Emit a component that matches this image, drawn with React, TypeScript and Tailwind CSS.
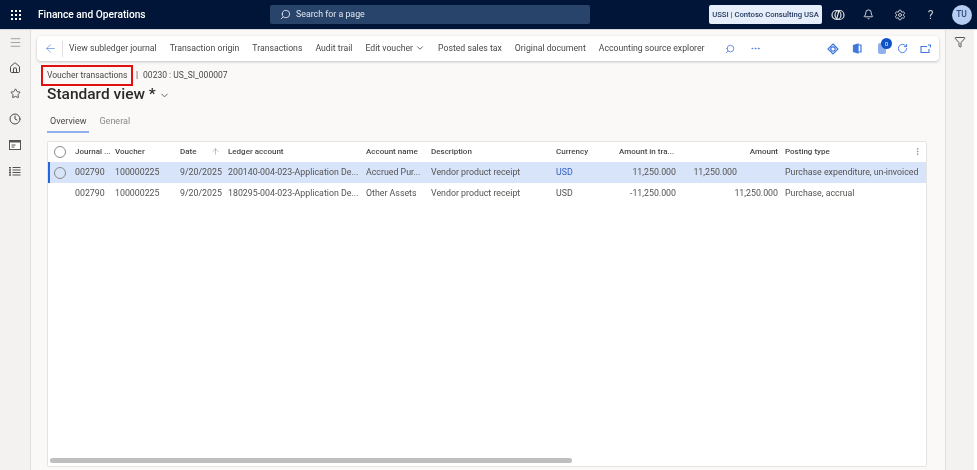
import { Bell, ChevronDown, Clock, Filter, Home, Search, Settings, Star, ArrowLeft, ArrowUp, MoreHorizontal, MoreVertical, RotateCw, Menu } from 'lucide-react';

const actions = ['View subledger journal', 'Transaction origin', 'Transactions', 'Audit trail'];
const actionsAfter = ['Posted sales tax', 'Original document', 'Accounting source explorer'];

function Waffle() {
  return (
    <div className="grid w-fit grid-cols-[repeat(3,2px)] gap-[2px]">
      {Array.from({ length: 9 }).map((_, i) => (
        <span key={i} className="h-[2px] w-[2px] bg-white" />
      ))}
    </div>
  );
}

function Radio() {
  return <span className="block h-[12px] w-[12px] rounded-full border border-[#8a8886] bg-transparent" />;
}

function TopBar() {
  return (
    <header className="flex h-[29px] shrink-0 items-center bg-[#001537] text-white">
      <div className="w-[38px] pl-[11px]">
        <Waffle />
      </div>
      <span className="w-[232px] text-[10.2px] font-medium">Finance and Operations</span>
      <div className="flex h-[19px] w-[320px] items-center gap-[5px] rounded-[2px] bg-[#29446b] pl-[10px] text-[8.8px] text-[#dfe6ef]">
        <Search size={11} className="-scale-x-100" />
        <span>Search for a page</span>
      </div>
      <div className="ml-[119px] flex h-[19px] w-[113px] items-center justify-center rounded-[2px] bg-[#e6eefb] text-[7.7px] font-medium text-[#243a5e]">
        USSI | Contoso Consulting USA
      </div>
      <div className="flex w-[31px] justify-center">
        <svg width="14" height="14" viewBox="0 0 14 14" fill="none" stroke="#e4e4e4" strokeWidth="1.2">
          <circle cx="5.5" cy="7" r="4.5" />
          <circle cx="8.5" cy="7" r="4.5" />
          <path d="M8 2.5 5.5 11.5" />
        </svg>
      </div>
      <div className="flex w-[31px] justify-center text-[#e4e4e4]">
        <Bell size={11} />
      </div>
      <div className="flex w-[31px] justify-center text-[#c9ccd2]">
        <Settings size={12} />
      </div>
      <div className="flex w-[31px] justify-center text-[12px] text-[#c9ccd2]">?</div>
      <div className="flex w-[31px] justify-center">
        <div className="flex h-[20px] w-[20px] items-center justify-center rounded-full bg-[#b6cdf2] text-[8.5px] font-medium text-[#2e4a7d]">
          TU
        </div>
      </div>
    </header>
  );
}

function SideRail() {
  return (
    <aside className="flex w-[31px] shrink-0 flex-col items-center border-r border-[#e1dfdd] bg-[#f3f2f1] pt-[6px] text-[#4a4a4a]">
      <Menu size={13} strokeWidth={1.2} className="text-[#777]" />
      <Home size={12} className="mt-[13px]" />
      <Star size={11} className="mt-[14px]" />
      <Clock size={12} className="mt-[14px]" />
      <svg width="12" height="10" viewBox="0 0 12 10" className="mt-[15px]">
        <rect x="0.5" y="0.5" width="11" height="9" fill="#fff" stroke="#555" />
        <rect x="0.5" y="0.5" width="11" height="2" fill="#555" />
        <path d="M2.5 5h4M2.5 7h3" stroke="#555" />
      </svg>
      <svg width="12" height="11" viewBox="0 0 12 11" className="mt-[16px]" stroke="#555" strokeWidth="1">
        <path d="M1 1v9M3.500 1.500h8M3.500 4h8M3.500 6.500h8M3.500 9h8M0 1.500h2M0 4h2M0 6.500h2M0 9h2" />
      </svg>
    </aside>
  );
}

function Toolbar() {
  return (
    <div className="flex h-[25px] items-center rounded-[4px] bg-white text-[8.7px] text-[#4a4846] shadow-[0_1px_3px_rgba(0,0,0,0.22)]">
      <ArrowLeft size={13} strokeWidth={1.2} className="ml-[7px] text-[#4f7fe0]" />
      <span className="ml-[5px] h-[16px] w-px bg-[#e1dfdd]" />
      <div className="ml-[6px] flex w-[638px] shrink-0 items-center gap-[13px]">
        {actions.map((a) => (
          <span key={a} className="whitespace-nowrap">{a}</span>
        ))}
        <span className="flex items-center gap-[2px] whitespace-nowrap">
          Edit voucher
          <ChevronDown size={10} />
        </span>
        {actionsAfter.map((a) => (
          <span key={a} className="whitespace-nowrap">{a}</span>
        ))}
      </div>
      <Search size={10} className="ml-[18px] -scale-x-100 text-[#4f7fe0]" />
      <MoreHorizontal size={11} className="ml-[15px] text-[#4f7fe0]" />
      <div className="ml-auto mr-[8px] flex items-center text-[#3f78dc]">
        <svg width="12" height="12" viewBox="0 0 12 12" fill="none" stroke="currentColor" strokeWidth="1.2">
          <path d="M6 1 11 6 6 11 1 6Z" />
          <circle cx="6" cy="6" r="2.2" />
        </svg>
        <svg width="10" height="11" viewBox="0 0 10 11" className="ml-[13px]" fill="none" stroke="currentColor" strokeWidth="1.2">
          <path d="M6 1 1.500 2.500v6L6 10Z" fill="currentColor" />
          <path d="M6 2h3v7H6" />
        </svg>
        <div className="relative ml-[16px] h-[11px] w-[8px] rounded-[2px] bg-[#8fb0ec]">
          <span className="absolute -right-[6px] -top-[5px] flex h-[11px] w-[11px] items-center justify-center rounded-full bg-[#0f52c8] text-[6px] text-white">
            0
          </span>
        </div>
        <RotateCw size={11} className="ml-[11px]" />
        <svg width="11" height="10" viewBox="0 0 11 10" className="ml-[12px]" fill="none" stroke="currentColor" strokeWidth="1.100">
          <path d="M7 2.500H1v6h8V5M8 1h2.500v2.500" />
        </svg>
      </div>
    </div>
  );
}

type Row = {
  journal: string;
  voucher: string;
  date: string;
  ledger: string;
  name: string;
  currency: string;
  amountTra: string;
  posting: string;
};

const rows: Row[] = [
  { journal: '002790', voucher: '100000225', date: '9/20/2025', ledger: '200140-004-023-Application De...', name: 'Accrued Pur...', currency: 'USD', amountTra: '11,250.000', posting: 'Purchase expenditure, un-invoiced' },
  { journal: '002790', voucher: '100000225', date: '9/20/2025', ledger: '180295-004-023-Application De...', name: 'Other Assets', currency: 'USD', amountTra: '-11,250.000', posting: 'Purchase, accrual' },
];

function HeaderRow() {
  return (
    <div className="flex h-[20px] items-center text-[8px] font-medium text-[#4a4846]">
      <div className="w-[27px] shrink-0 pl-[6px]">
        <Radio />
      </div>
      <div className="w-[40px] shrink-0">Journal ...</div>
      <div className="w-[65px] shrink-0">Voucher</div>
      <div className="flex w-[48px] shrink-0 items-center">
        Date
        <ArrowUp size={9} strokeWidth={1.2} className="ml-[15px] text-[#777]" />
      </div>
      <div className="w-[138px] shrink-0">Ledger account</div>
      <div className="w-[65px] shrink-0">Account name</div>
      <div className="w-[125px] shrink-0">Description</div>
      <div className="w-[63px] shrink-0">Currency</div>
      <div className="w-[76px] shrink-0">Amount in tra...</div>
      <div className="w-[83px] shrink-0 text-right">Amount</div>
      <div className="ml-[7px] flex flex-1 items-center justify-between pr-[4px]">
        Posting type
        <MoreVertical size={9} className="text-[#888]" />
      </div>
    </div>
  );
}

function DataRow({ row, selected }: { row: Row; selected: boolean }) {
  return (
    <div
      className={`flex h-[21px] items-center border-l-2 pt-[1px] text-[8.8px] text-[#55534f] ${
        selected ? 'border-[#2266e3] bg-[#d7e4fa]' : 'border-transparent bg-white'
      }`}
    >
      <div className="w-[25px] shrink-0 pl-[4px]">{selected && <Radio />}</div>
      <div className="w-[40px] shrink-0">{row.journal}</div>
      <div className="w-[65px] shrink-0">{row.voucher}</div>
      <div className="w-[48px] shrink-0">{row.date}</div>
      <div className="w-[138px] shrink-0 whitespace-nowrap">{row.ledger}</div>
      <div className="w-[65px] shrink-0 whitespace-nowrap">{row.name}</div>
      <div className="w-[125px] shrink-0">Vendor product receipt</div>
      <div className={`w-[63px] shrink-0 ${selected ? 'text-[#2f5fc4]' : ''}`}>{row.currency}</div>
      <div className="w-[57px] shrink-0 text-right">{row.amountTra}</div>
      <div className={`w-[102px] shrink-0 ${selected ? 'pr-[41px]' : ''} text-right`}>11,250.000</div>
      <div className="ml-[7px] whitespace-nowrap">{row.posting}</div>
    </div>
  );
}

function Grid() {
  return (
    <div className="mx-[10px] mt-[8px] flex h-[326px] w-[880px] flex-col rounded-[2px] border border-[#e6e4e2] bg-white">
      <HeaderRow />
      {rows.map((r, i) => (
        <DataRow key={i} row={r} selected={i === 0} />
      ))}
      <div className="mx-[2px] mb-[3px] mt-auto h-[5px] w-[522px] rounded-full bg-[#bfbfbf]" />
    </div>
  );
}

export default function App() {
  return (
    <div
      className="relative flex h-[470px] w-[977px] flex-col overflow-hidden bg-white blur-[0.3px]"
      style={{ fontFamily: 'Roboto, "Noto Sans", sans-serif' }}
    >
      <TopBar />
      <div className="h-[1px] shrink-0 bg-[#d8d8d8]" />
      <div className="flex min-h-0 flex-1">
        <SideRail />
        <main className="w-[914px] bg-[#faf9f8] px-[6px] pt-[6px]">
          <Toolbar />
          <div className="ml-[4px] mt-[4px] flex h-[21px] items-center whitespace-nowrap text-[8.5px] text-[#4a4846]">
            <span className="flex h-[21px] w-[92px] items-center border-2 border-[#e01010] pl-[4px]">Voucher transactions</span>
            <span className="ml-[3px]">|</span>
            <span className="ml-[5px]">00230 : US_SI_000007</span>
          </div>
          <div className="ml-[10px] mt-[-2px] flex items-center text-[15.5px] leading-[20px] font-medium text-[#2b2a29]">
            Standard view *
            <ChevronDown size={11} className="ml-[3px] mt-[3px] text-[#555]" />
          </div>
          <div className="ml-[10px] mt-[11px] flex text-[9px]">
            <span className="border-b-2 border-[#8fb0ec] px-[3px] pb-[2px] text-[#4a4846]">Overview</span>
            <span className="ml-[10px] text-[#8a8886]">General</span>
          </div>
          <Grid />
        </main>
        <aside className="flex w-[29px] shrink-0 justify-center border-l border-[#e1dfdd] bg-[#f3f2f1] pt-[6px]">
          <Filter size={12} className="text-[#555]" />
        </aside>
      </div>
    </div>
  );
}
